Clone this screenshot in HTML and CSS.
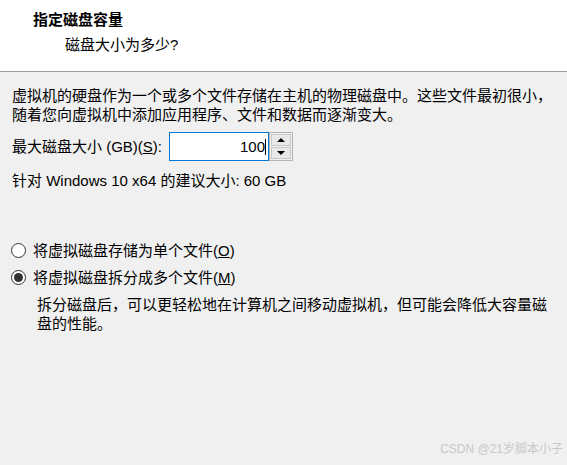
FILE: index.html
```html
<!DOCTYPE html>
<html lang="zh-CN">
<head>
  <meta charset="UTF-8" />
  <title>指定磁盘容量</title>
  <link rel="stylesheet" href="styles.css">
</head>
<body>
  <div class="header">
    <div class="title">指定磁盘容量</div>
    <div class="subtitle">磁盘大小为多少?</div>
  </div>

  <div class="content">
    <p class="intro">虚拟机的硬盘作为一个或多个文件存储在主机的物理磁盘中。这些文件最初很小，<br>随着您向虚拟机中添加应用程序、文件和数据而逐渐变大。</p>

    <div class="size-row">
      <label for="size">最大磁盘大小 (GB)(<u>S</u>):</label>
      <div class="spinbox">
        <div class="spin-input" id="size">100<span class="caret"></span></div>
        <div class="spin-buttons">
          <div class="spin-btn"><span class="arrow up"></span></div>
          <div class="spin-btn"><span class="arrow down"></span></div>
        </div>
      </div>
    </div>

    <div class="hint">针对 Windows 10 x64 的建议大小: 60 GB</div>

    <div class="options">
      <div class="radio-row">
        <span class="radio"></span>
        <span>将虚拟磁盘存储为单个文件(<u>O</u>)</span>
      </div>
      <div class="radio-row">
        <span class="radio checked"></span>
        <span>将虚拟磁盘拆分成多个文件(<u>M</u>)</span>
      </div>
      <p class="option-desc">拆分磁盘后，可以更轻松地在计算机之间移动虚拟机，但可能会降低大容量磁<br>盘的性能。</p>
    </div>
  </div>

  <div class="watermark">CSDN @21岁脚本小子</div>
</body>
</html>
```

FILE: styles.css
```css
body {
  margin: 0;
  height: 465px;
  position: relative;
  overflow: hidden;
  font-family: "Liberation Sans", "Noto Sans CJK SC", sans-serif;
  font-size: 15px;
  line-height: 19px;
  background-color: #f0f0f0;
  color: #000;
}

.header {
  height: 72px;
  box-sizing: border-box;
  padding-top: 10px;
  background-color: #fff;
  border-bottom: 1px solid #a0a0a0;
}

.title {
  padding-left: 33px;
  font-weight: bold;
}

.subtitle {
  padding-left: 65px;
  margin-top: 6px;
}

.content {
  padding: 14px 13px 0 12px;
}

.intro {
  margin: 0;
}

.size-row {
  display: flex;
  align-items: center;
  margin-top: 8px;
  height: 29px;
}

.size-row label {
  margin-right: 7px;
}

.spinbox {
  display: flex;
  height: 29px;
}

.spin-input {
  width: 97px;
  border: 1px solid #0078d7;
  background-color: #fff;
  display: flex;
  align-items: center;
  justify-content: flex-end;
  padding-right: 2px;
  box-sizing: content-box;
  height: 27px;
  width: 96px;
}

.caret {
  display: inline-block;
  width: 1px;
  height: 16px;
  background-color: #000;
}

.spin-buttons {
  display: flex;
  flex-direction: column;
  gap: 1px;
  width: 20px;
  padding: 1px;
  border: 1px solid #b4b4b4;
  background-color: #f0f0f0;
}

.spin-btn {
  flex: 1;
  border: 1px solid #c8c8c8;
  background-color: #e8e8e8;
  display: flex;
  align-items: center;
  justify-content: center;
}

.arrow {
  width: 0;
  height: 0;
  border-left: 4px solid transparent;
  border-right: 4px solid transparent;
}

.arrow.up {
  border-bottom: 4px solid #000;
}

.arrow.down {
  border-top: 4px solid #000;
}

.hint {
  margin-top: 10px;
}

.options {
  margin-top: 51px;
}

.radio-row {
  display: flex;
  align-items: center;
  height: 19px;
  margin-bottom: 8px;
}

.radio {
  width: 13px;
  height: 13px;
  border: 1px solid #333;
  border-radius: 50%;
  background-color: #fff;
  margin-right: 7px;
  margin-left: -1px;
  display: flex;
  align-items: center;
  justify-content: center;
}

.radio.checked::after {
  content: "";
  width: 9px;
  height: 9px;
  border-radius: 50%;
  background-color: #333;
}

.option-desc {
  margin: 5px 0 0 25px;
}

.watermark {
  position: absolute;
  right: 4px;
  bottom: 6px;
  font-size: 12px;
  color: #c8c8c8;
}
```
